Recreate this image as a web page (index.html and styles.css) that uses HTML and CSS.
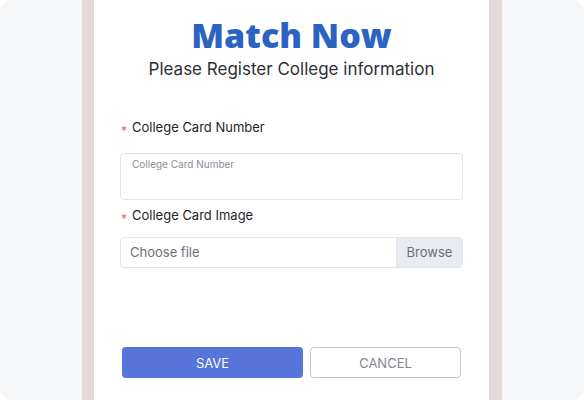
FILE: index.html
```html
<!DOCTYPE html>
<html lang="en">
<head>
    <meta charset="UTF-8">
    <meta name="viewport" content="width=device-width, initial-scale=1.0">
    <title>Match Now</title>
    <link rel="stylesheet" href="styles.css">
</head>
<body>
    <div id="frame">
        <div id="column">
            <div id="card">
                <h1 class="title">Match Now</h1>
                <p class="subtitle">Please Register College information</p>

                <div class="field">
                    <label class="label"><span class="req">*</span>College Card Number</label>
                    <div class="text-box">College Card Number</div>
                </div>

                <div class="field">
                    <label class="label"><span class="req">*</span>College Card Image</label>
                    <div class="file-box">
                        <span class="file-name">Choose file</span>
                        <span class="browse">Browse</span>
                    </div>
                </div>

                <div class="actions">
                    <button class="btn save">SAVE</button>
                    <button class="btn cancel">CANCEL</button>
                </div>
            </div>
        </div>
    </div>
</body>
</html>
```

FILE: styles.css
```css
body {
    margin: 0;
    padding: 0;
    background: #ffffff;
    font-family: "Open Sans", Arial, sans-serif;
}
#frame {
    width: 584px;
    height: 400px;
    background: #f6f7f9;
    border-radius: 12px;
    display: flex;
    justify-content: center;
    overflow: hidden;
}
#column {
    width: 395px;
    padding: 0 13px 0 12px;
    background: #e2d9d8;
}
#card {
    height: 100%;
    background: #ffffff;
    padding: 0 26px;
    box-sizing: border-box;
    display: flex;
    flex-direction: column;
}
.title {
    margin: 14px 0 0;
    text-align: center;
    font-family: "Open Sans", sans-serif;
    font-weight: 800;
    font-size: 34px;
    line-height: 42px;
    color: #2b63c2;
}
.subtitle {
    margin: 2px 0 0;
    text-align: center;
    font-family: Inter, sans-serif;
    font-size: 17px;
    line-height: 22px;
    color: #2e2e36;
}
.field {
    display: flex;
    flex-direction: column;
}
.label {
    display: flex;
    align-items: center;
    font-family: Inter, sans-serif;
    font-size: 13px;
    color: #1f1f27;
    height: 20px;
}
.req {
    color: #e0665f;
    font-size: 12px;
    width: 12px;
    padding-left: 1px;
    box-sizing: border-box;
    position: relative;
    top: 3px;
}
.field:nth-of-type(1) {
    margin-top: 37px;
}
.field:nth-of-type(1) .text-box {
    margin-top: 16px;
}
.text-box {
    height: 47px;
    border: 1px solid #e3e3ea;
    border-radius: 4px;
    box-sizing: border-box;
    padding: 4px 11px;
    font-family: Inter, sans-serif;
    font-size: 10px;
    color: #8d8d96;
}
.field:nth-of-type(2) {
    margin-top: 5px;
}
.file-box {
    margin-top: 12px;
    height: 31px;
    border: 1px solid #e3e3ea;
    border-radius: 4px;
    box-sizing: border-box;
    display: flex;
    overflow: hidden;
    font-family: Inter, sans-serif;
    font-size: 13px;
    color: #6c6f7a;
}
.file-name {
    flex-grow: 1;
    padding-left: 9px;
    line-height: 29px;
}
.browse {
    width: 65px;
    text-align: center;
    line-height: 29px;
    background: #e9ebf3;
    border-left: 1px solid #e3e3ea;
}
.actions {
    margin-top: auto;
    margin-bottom: 22px;
    display: flex;
    gap: 7px;
    padding: 0 2px;
}
.btn {
    height: 31px;
    border-radius: 4px;
    font-family: Inter, sans-serif;
    font-size: 13px;
    cursor: pointer;
}
.save {
    width: 181px;
    background: #5674d9;
    border: none;
    color: #ffffff;
}
.cancel {
    width: 151px;
    background: #ffffff;
    border: 1px solid #c6c6cf;
    color: #85858f;
}
```
